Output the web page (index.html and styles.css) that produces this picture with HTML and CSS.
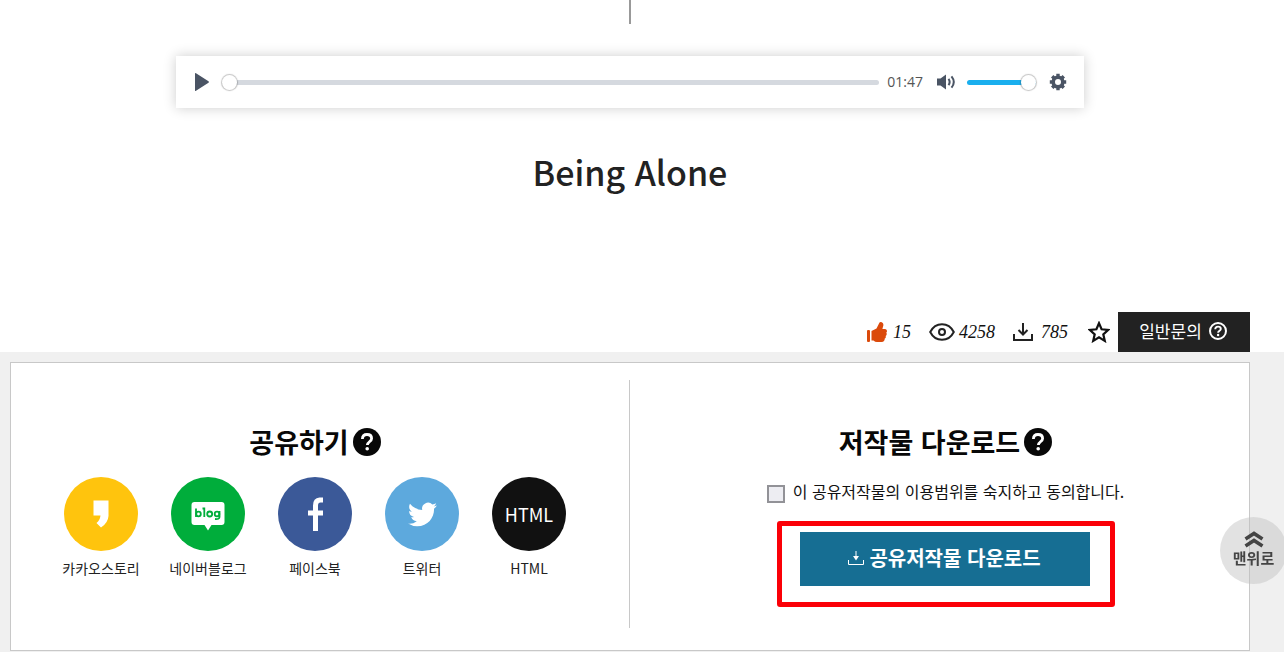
FILE: index.html
```html
<!DOCTYPE html>
<html lang="ko">
<head>
<meta charset="utf-8">
<meta name="viewport" content="width=device-width, initial-scale=1">
<title>Being Alone</title>
<link rel="stylesheet" href="styles.css">
</head>
<body>
<svg class="sprite" aria-hidden="true">
  <symbol id="help-solid" viewBox="0 0 28 28">
    <circle cx="14" cy="14" r="14" fill="#080808"/>
    <path d="M9.400 11C9.500 7.600 11.500 6.500 14 6.500c2.700 0 4.600 1.500 4.600 3.900 0 3.400-4.200 3.300-4.200 6.600" fill="none" stroke="#fff" stroke-width="2.800"/>
    <circle cx="14.200" cy="20.800" r="1.800" fill="#fff"/>
  </symbol>
  <symbol id="download" viewBox="0 0 20 18">
    <path d="M10 0v11M5.500 7l4.500 4.500L14.500 7M1 11v6h18v-6" fill="none" stroke="currentColor" stroke-width="2"/>
  </symbol>
</svg>

<main class="work">
  <span class="stem"></span>
  <div class="player">
    <button class="icon-button" type="button" aria-label="재생">
      <svg width="16" height="20" viewBox="0 0 16 20"><path d="M1 1.500Q1 .5 2 1.200L14.500 9.200q1 .8 0 1.600L2 18.800Q1 19.500 1 18.500z" fill="#4a5464"/></svg>
    </button>
    <input class="slider seek" type="range" min="0" max="107" value="0" aria-label="재생 위치">
    <span class="time">01:47</span>
    <button class="icon-button" type="button" aria-label="음소거">
      <svg width="20" height="18" viewBox="0 0 20 18"><path d="M1 5.500h3.500L10 1.500v15l-5.500-4H1z" fill="#4a5464"/><path d="M12.500 5.800q2.300 3.200 0 6.400M15.500 3.300q4.600 5.700 0 11.400" fill="none" stroke="#4a5464" stroke-width="2"/></svg>
    </button>
    <input class="slider volume" type="range" min="0" max="100" value="100" aria-label="음량">
    <button class="icon-button" type="button" aria-label="설정">
      <svg width="18" height="18" viewBox="0 0 18 18"><circle cx="9" cy="9" r="4.800" fill="none" stroke="#4a5464" stroke-width="3.600"/><path d="M9 .8v2.500M9 14.700v2.500M.8 9h2.500M14.700 9h2.500M3.200 3.200l1.800 1.800M13 13l1.800 1.800M3.200 14.800L5 13M13 5l1.800-1.800" stroke="#4a5464" stroke-width="3.400"/></svg>
    </button>
  </div>
  <h1 class="title">Being Alone</h1>
  <div class="stats">
    <span class="stat likes">
      <svg width="20" height="20" viewBox="0 0 20 20" fill="#db4a0b"><rect x="0" y="8" width="3" height="12" rx="1"/><path d="M4.500 9L9.500 6.500 12 1.500Q12.800-.4 14.800.3 17 1.200 16.200 4l-.8 3h2.800q1.800.3 1.800 2 0 1.200-.8 1.700.8.800.4 2-.3 1-1 1.300.5.900 0 1.800-.3.700-1 1 .3 1-.5 2-.7 1.200-2.600 1.200H10Q8 20 6.500 18.500h-2z"/></svg>
      <em>15</em>
    </span>
    <span class="stat views">
      <svg width="26" height="18" viewBox="0 0 26 18"><path d="M1.200 9C6.500-1.400 19.500-1.400 24.800 9 19.500 19.400 6.500 19.400 1.200 9z" fill="none" stroke="#222" stroke-width="2"/><circle cx="13" cy="9" r="3" fill="none" stroke="#222" stroke-width="2"/></svg>
      <em>4258</em>
    </span>
    <span class="stat downloads">
      <svg width="20" height="18"><use href="#download"/></svg>
      <em>785</em>
    </span>
    <button class="icon-button star" type="button" aria-label="관심 저작물">
      <svg width="22" height="22" viewBox="0 0 22 22"><path d="M11 2.200l2.600 6.100 6.700.6-5 4.400 1.500 6.600-5.800-3.500-5.800 3.500 1.500-6.600-5-4.400 6.700-.6z" fill="none" stroke="#111" stroke-width="2.200"/></svg>
    </button>
    <a class="inquiry" href="#inquiry">일반문의
      <svg width="18" height="18" viewBox="0 0 18 18" fill="none" stroke="#fff"><circle cx="9" cy="9" r="8" stroke-width="2"/><path d="M6.200 7.200C6.300 5.300 7.500 4.600 9 4.600c1.700 0 2.800.9 2.800 2.300C11.800 8.800 9.100 8.600 9.100 10.800" stroke-width="1.900"/><circle cx="9.100" cy="13" r="1.200" fill="#fff" stroke="none"/></svg>
    </a>
  </div>
</main>

<section class="actions">
  <div class="panel">
    <section class="half share">
      <h2 class="heading">공유하기 <svg width="28" height="28"><use href="#help-solid"/></svg></h2>
      <ul class="networks">
        <li><a class="network" href="#kakaostory"><span class="badge kakao"><svg width="17" height="28" viewBox="0 0 17 28"><path d="M.5.500h15V16q-.5 7-7.500 11.500L3.500 23Q7 20 7.500 15.500H.5z" fill="#fff"/></svg></span>카카오스토리</a></li>
        <li><a class="network" href="#naverblog"><span class="badge naver"><svg class="blog" width="34" height="30" viewBox="0 0 34 30"><path d="M3.500 1h27q3 0 3 3v17q0 3-3 3h-10L17 29.500 13.500 24h-10q-3 0-3-3V4q0-3 3-3z" fill="#fff"/><g fill="none" stroke="#00ad3b" stroke-width="1.800"><path d="M5 7.500v8.500M11.500 7.500h1.800V16"/><circle cx="7.500" cy="13" r="2.300"/><circle cx="18.700" cy="13" r="2.500"/><circle cx="26" cy="13" r="2.300"/><path d="M28.500 10v6q0 2.500-4.500 2"/></g></svg></span>네이버블로그</a></li>
        <li><a class="network" href="#facebook"><span class="badge facebook"><svg width="17" height="36" viewBox="0 0 17 36"><path d="M6 35V19.500H1v-5h5V9.500Q6 2 12.500 1.500H16v5h-2.500Q11 6.500 11 9.500v5h5v5h-5V35z" fill="#fff"/></svg></span>페이스북</a></li>
        <li><a class="network" href="#twitter"><span class="badge twitter"><svg width="29" height="29" viewBox="0 0 24 24"><path d="M23.950 4.570a10 10 0 0 1-2.820.77 4.960 4.960 0 0 0 2.160-2.720c-.95.560-2 .96-3.120 1.180a4.920 4.920 0 0 0-8.390 4.490C7.690 8.100 4.070 6.130 1.640 3.160a4.930 4.930 0 0 0 1.520 6.570 4.900 4.900 0 0 1-2.230-.61v.06a4.920 4.920 0 0 0 3.950 4.830 5 5 0 0 1-2.210.08 4.930 4.930 0 0 0 4.600 3.420A9.870 9.870 0 0 1 0 19.540a13.990 13.990 0 0 0 7.550 2.210c9.050 0 14-7.500 14-13.980 0-.21 0-.42-.02-.63a9.940 9.940 0 0 0 2.420-2.570z" fill="#fff"/></svg></span>트위터</a></li>
        <li><a class="network" href="#html"><span class="badge html">HTML</span>HTML</a></li>
      </ul>
    </section>
    <section class="half download">
      <h2 class="heading">저작물 다운로드 <svg width="28" height="28"><use href="#help-solid"/></svg></h2>
      <label class="agree"><input class="tick" type="checkbox"> <span>이 공유저작물의 이용범위를 숙지하고 동의합니다.</span></label>
      <div class="highlight">
        <button class="get" type="button">
          <svg width="16" height="15" viewBox="0 0 16 15"><path d="M8 0v7M.5 9v4.500h15V9" fill="none" stroke="#fff"/><path d="M5 5h6L8 9.500z" fill="#fff"/></svg>
          공유저작물 다운로드
        </button>
      </div>
    </section>
  </div>
</section>

<a class="to-top" href="#top">
  <svg width="20" height="18" viewBox="0 0 20 18"><path d="M1.500 9L10 3.500 18.500 9M1.500 16L10 10.500l8.500 5.500" fill="none" stroke="#444" stroke-width="3.600"/></svg>
  맨위로
</a>
</body>
</html>
```
FILE: styles.css
```css
* { box-sizing: border-box; }

body {
  margin: 0;
  background: #fff;
  color: #222;
  font: 14px/20px "Noto Sans CJK KR", sans-serif;
}

a { color: inherit; text-decoration: none; }
button { font: inherit; cursor: pointer; }
svg { flex: none; display: block; }
.sprite { position: absolute; width: 0; height: 0; }

.work {
  display: flex;
  flex-direction: column;
  align-items: center;
  padding: 0 34px 0 10px;
}

.stem { width: 2px; height: 24px; background: #999; }

.player {
  display: flex;
  align-items: center;
  width: 100%;
  max-width: 908px;
  height: 52px;
  margin-top: 32px;
  padding: 0 17px 0 18px;
  background: #fff;
  box-shadow: 0 0 12px rgba(0, 0, 0, 0.2);
}

.icon-button {
  display: flex;
  padding: 0;
  border: 0;
  background: none;
}

.slider {
  appearance: none;
  height: 16px;
  margin: 0;
  background: none;
}

.slider::-webkit-slider-runnable-track {
  height: 5px;
  border-radius: 3px;
  background: #d5d9df;
}

.slider::-webkit-slider-thumb {
  appearance: none;
  width: 15px;
  height: 15px;
  margin-top: -5px;
  border-radius: 50%;
  background: #fff;
  box-shadow: 0 0 1px 1px rgba(60, 60, 60, 0.3);
}

.seek { flex: 1; min-width: 0; margin-left: 12px; }
.volume { width: 69px; margin: 0 13px 0 11px; }
.volume::-webkit-slider-runnable-track { background: #1aafee; }

.time {
  margin: 0 13px 0 8px;
  color: #555;
  font: 14px/20px "Open Sans", sans-serif;
}

.title {
  margin: 34px 0 0;
  font-size: 34px;
  line-height: 60px;
  font-weight: 500;
}

.stats {
  display: flex;
  align-items: center;
  align-self: stretch;
  justify-content: flex-end;
  margin-top: 110px;
}

.stat { display: flex; align-items: center; gap: 4px; margin-right: 18px; }
.stat em { font: italic 18px/20px "Liberation Serif", serif; color: #111; }
.likes { gap: 6px; }
.downloads { gap: 8px; margin-right: 20px; }
.star { margin-right: 8px; }

.inquiry {
  display: flex;
  align-items: center;
  justify-content: center;
  gap: 7px;
  width: 132px;
  height: 40px;
  padding: 0 2px 2px 0;
  background: #222;
  color: #fff;
  font-size: 17px;
}

.actions {
  min-height: 300px;
  padding: 10px 34px 0 10px;
  background: #f0f0f0;
}

.panel {
  display: grid;
  grid-template-columns: 1fr 1fr;
  padding: 17px 0 22px;
  border: 1px solid #c8c8c8;
  background: #fff;
}

.half {
  display: flex;
  flex-direction: column;
  align-items: center;
  min-height: 248px;
  padding-top: 42px;
}

.share { padding-right: 10px; border-right: 1px solid #c8c8c8; }
.download { padding-left: 12px; }

.heading {
  display: flex;
  align-items: center;
  gap: 4px;
  margin: 0;
  color: #080808;
  font-size: 27px;
  line-height: 40px;
  font-weight: 700;
}

.networks {
  display: flex;
  gap: 27px;
  margin: 15px 0 0;
  padding: 0;
  list-style: none;
}

.network {
  display: flex;
  flex-direction: column;
  align-items: center;
  gap: 7px;
  width: 80px;
  white-space: nowrap;
}

.badge {
  display: flex;
  align-items: center;
  justify-content: center;
  width: 74px;
  height: 74px;
  border-radius: 50%;
  color: #fff;
  font-size: 18px;
}

.blog { margin-top: 4px; }
.kakao { background: #ffc40d; }
.naver { background: #00ad3b; }
.facebook { background: #3b5998; }
.twitter { background: #5da9dd; }
.html { background: #111; }

.agree {
  display: flex;
  align-items: flex-end;
  gap: 8px;
  margin-top: 17px;
  color: #111;
  font-size: 16px;
  line-height: 24px;
}

.tick {
  appearance: none;
  width: 18px;
  height: 18px;
  margin: 0;
  border: 2px solid #929297;
  background: #ededf2;
}

.tick:checked { background: #166e93; }

.highlight {
  margin-top: 18px;
  padding: 6px 20px 16px 18px;
  border: 5px solid #fb0007;
  border-radius: 3px;
}

.get {
  display: flex;
  align-items: center;
  justify-content: center;
  gap: 5px;
  width: 290px;
  height: 54px;
  padding: 0 0 2px;
  border: 0;
  background: #166e93;
  color: #fff;
  font-size: 20px;
  font-weight: 700;
}

.to-top {
  position: fixed;
  right: -3px;
  bottom: 68px;
  display: flex;
  flex-direction: column;
  align-items: center;
  width: 67px;
  height: 67px;
  padding-top: 13px;
  border-radius: 50%;
  background: rgba(190, 190, 190, 0.45);
  color: #444;
  font-size: 15px;
  font-weight: 700;
}
```
